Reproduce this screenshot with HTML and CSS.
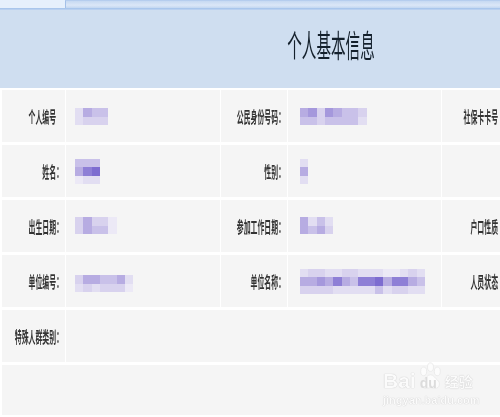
FILE: index.html
```html
<!DOCTYPE html>
<html lang="zh-CN">

<head>
    <meta charset="UTF-8">
    <title>个人基本信息</title>
    <link rel="stylesheet" href="styles.css">
</head>

<body>
    <div class="page">
        <div class="tabs">
            <div class="tab-first"></div>
            <div class="tab-rest"></div>
        </div>

        <div class="header">
            <h1 class="title">个人基本信息</h1>
        </div>

        <div class="info-table">
            <div class="cell label"><span>个人编号　</span></div>
            <div class="cell value">
                <div class="mosaic c4">
                    <i class="s2"></i><i class="s5"></i><i class="s4"></i><i class="s4"></i>
                    <i class="s2"></i><i class="s3"></i><i class="s3"></i><i class="s3"></i>
                </div>
            </div>
            <div class="cell label"><span>公民身份号码：</span></div>
            <div class="cell value right">
                <div class="mosaic c8">
                    <i class="s5"></i><i class="s6"></i><i class="s3"></i><i class="s6"></i><i class="s5"></i><i class="s4"></i><i class="s4"></i><i class="s3"></i>
                    <i class="s4"></i><i class="s4"></i><i class="s3"></i><i class="s4"></i><i class="s4"></i><i class="s4"></i><i class="s4"></i><i class="s2"></i>
                </div>
            </div>
            <div class="cell label"><span>社保卡卡号</span></div>

            <div class="cell label"><span>姓名：</span></div>
            <div class="cell value">
                <div class="mosaic c3">
                    <i class="s4"></i><i class="s4"></i><i class="s4"></i>
                    <i class="s5"></i><i class="s7"></i><i class="s8"></i>
                    <i class="s1"></i><i class="s2"></i><i class="s2"></i>
                </div>
            </div>
            <div class="cell label"><span>性别：</span></div>
            <div class="cell value right">
                <div class="mosaic c1">
                    <i class="s2"></i>
                    <i class="s5"></i>
                    <i class="s2"></i>
                </div>
            </div>
            <div class="cell label"><span></span></div>

            <div class="cell label"><span>出生日期：</span></div>
            <div class="cell value">
                <div class="mosaic c5 up">
                    <i class="s3"></i><i class="s5"></i><i class="s3"></i><i class="s3"></i><i class="s1"></i>
                    <i class="s3"></i><i class="s5"></i><i class="s4"></i><i class="s4"></i><i class="s1"></i>
                </div>
            </div>
            <div class="cell label"><span>参加工作日期：</span></div>
            <div class="cell value right">
                <div class="mosaic c4 up">
                    <i class="s5"></i><i class="s2"></i><i class="s4"></i><i class="s2"></i>
                    <i class="s5"></i><i class="s4"></i><i class="s5"></i><i class="s3"></i>
                </div>
            </div>
            <div class="cell label"><span>户口性质</span></div>

            <div class="cell label"><span>单位编号：</span></div>
            <div class="cell value">
                <div class="mosaic c7 down">
                    <i class="s3"></i><i class="s5"></i><i class="s5"></i><i class="s4"></i><i class="s4"></i><i class="s5"></i><i class="s2"></i>
                    <i class="s2"></i><i class="s3"></i><i class="s2"></i><i class="s3"></i><i class="s3"></i><i class="s3"></i><i class="s1"></i>
                </div>
            </div>
            <div class="cell label"><span>单位名称：</span></div>
            <div class="cell value right">
                <div class="mosaic c15 soft">
                    <i class="s2"></i><i class="s3"></i><i class="s3"></i><i class="s2"></i><i class="s2"></i><i class="s3"></i><i class="s3"></i><i class="s2"></i><i class="s2"></i><i class="s2"></i><i class="s1"></i><i class="s1"></i><i class="s2"></i><i class="s3"></i><i class="s2"></i>
                    <i class="s5"></i><i class="s5"></i><i class="s6"></i><i class="s5"></i><i class="s7"></i><i class="s5"></i><i class="s4"></i><i class="s7"></i><i class="s7"></i><i class="s8"></i><i class="s5"></i><i class="s7"></i><i class="s7"></i><i class="s5"></i><i class="s4"></i>
                    <i class="s3"></i><i class="s3"></i><i class="s3"></i><i class="s3"></i><i class="s2"></i><i class="s2"></i><i class="s2"></i><i class="s2"></i><i class="s2"></i><i class="s4"></i><i class="s2"></i><i class="s3"></i><i class="s3"></i><i class="s2"></i><i class="s2"></i>
                </div>
            </div>
            <div class="cell label"><span>人员状态</span></div>

            <div class="cell label"><span>特殊人群类别：</span></div>
            <div class="cell wide"></div>

            <div class="cell full"></div>
        </div>

        <div class="watermark">
            <div class="wm-logo">
                <span class="wm-bai">Bai</span>
                <svg class="wm-paw" viewBox="0 0 34 34">
                    <ellipse cx="9" cy="11" rx="3.5" ry="5"></ellipse>
                    <ellipse cx="17" cy="6" rx="3.5" ry="5"></ellipse>
                    <ellipse cx="25" cy="11" rx="3.5" ry="5"></ellipse>
                    <path d="M17 15c-4 0-5 4-8 6-4 3-3 10 3 10 2 0 3-1 5-1s3 1 5 1c6 0 7-7 3-10-3-2-4-6-8-6z"></path>
                </svg>
                <span class="wm-du">du</span>
                <span class="wm-jy">经验</span>
            </div>
            <div class="wm-url">jingyan.baidu.com</div>
        </div>
    </div>
</body>

</html>
```

FILE: styles.css
```css
html, body {
    margin: 0;
    padding: 0;
    background: #ffffff;
}

.page {
    position: relative;
    width: 500px;
    height: 417px;
    overflow: hidden;
    font-family: "Noto Sans CJK SC", "Liberation Sans", sans-serif;
}

.tabs {
    display: flex;
    height: 9px;
    border-bottom: 1px solid #a9c6ec;
    box-sizing: border-box;
    background: #d7e5f7;
}

.tab-first {
    width: 65px;
    background: #e6f0fc;
}

.tab-rest {
    flex: 1;
    border-left: 1px solid #a3c0e8;
    border-top: 1px solid #b5cdee;
    background: linear-gradient(#c6d9f2, #dbe7f7 60%, #c3d7f1);
}

.header {
    display: flex;
    justify-content: center;
    align-items: center;
    height: 79px;
    background: #cfdef0;
    box-sizing: border-box;
    border-top: 1px solid #b9d0ef;
}

.title {
    margin: 0 0 10px 162px;
    font-size: 31px;
    font-weight: 400;
    line-height: 32px;
    color: #14202c;
    white-space: nowrap;
    transform: scaleX(0.47);
    filter: blur(0.3px);
}

.info-table {
    display: grid;
    grid-template-columns: 63px 154px 66px 153px 58px;
    grid-auto-rows: 52px;
    column-gap: 1px;
    row-gap: 3px;
    padding: 2px 0 0 2px;
}

.cell {
    display: flex;
    align-items: center;
    background: #f5f5f5;
    box-sizing: border-box;
    min-width: 0;
}

.label {
    justify-content: flex-end;
    padding-right: 2px;
}

.label span {
    display: block;
    font-size: 16px;
    font-weight: 700;
    line-height: 18px;
    color: #333333;
    white-space: nowrap;
    transform: scaleX(0.43);
    transform-origin: right center;
    filter: blur(0.4px);
}

.value {
    padding: 0 0 0 9px;
}

.right {
    padding-left: 12px;
}

.wide {
    grid-column: 2 / 6;
}

.full {
    grid-column: 1 / 6;
    height: 50px;
}

.mosaic {
    display: grid;
    grid-auto-rows: 8.33px;
    margin-top: 1px;
}

.mosaic i {
    display: block;
}

.up {
    margin-top: -1px;
}

.down {
    margin-top: 5px;
}

.soft {
    filter: blur(0.5px);
}

.c1 { grid-template-columns: repeat(1, 8.33px); }
.c3 { grid-template-columns: repeat(3, 8.33px); }
.c4 { grid-template-columns: repeat(4, 8.33px); }
.c5 { grid-template-columns: repeat(5, 8.33px); }
.c7 { grid-template-columns: repeat(7, 8.33px); }
.c8 { grid-template-columns: repeat(8, 8.33px); }
.c15 { grid-template-columns: repeat(15, 8.33px); }

.s1 { background: #ece9f6; }
.s2 { background: #e2def2; }
.s3 { background: #d8d2ee; }
.s4 { background: #c9c1e9; }
.s5 { background: #b7ace2; }
.s6 { background: #a598dc; }
.s7 { background: #8e7fd6; }
.s8 { background: #7d6cd0; }

.watermark {
    position: absolute;
    left: 383px;
    top: 363px;
    width: 112px;
    color: #fbfbfb;
    font-family: "Liberation Sans", sans-serif;
    filter: blur(0.4px);
}

.wm-logo {
    display: flex;
    align-items: flex-end;
    height: 28px;
    font-size: 21px;
    font-weight: 700;
    line-height: 20px;
    text-shadow: 0 0 1px rgba(0, 0, 0, 0.3);
}

.wm-paw {
    width: 29px;
    height: 29px;
    margin-left: 0;
    fill: #fcfcfc;
    stroke: #e2e2e2;
    stroke-width: 0.7;
}

.wm-du {
    margin-left: -25px;
    width: 21px;
    font-size: 14px;
    line-height: 16px;
    color: #dcdcdc;
    text-shadow: none;
}

.wm-jy {
    margin-left: 4px;
    font-family: "Noto Sans CJK SC", sans-serif;
    font-size: 14px;
    font-weight: 700;
    line-height: 20px;
}

.wm-url {
    margin-top: 3px;
    font-size: 11px;
    font-weight: 700;
    line-height: 12px;
    color: #fbfbfb;
    white-space: nowrap;
    text-shadow: 0 0 1px rgba(0, 0, 0, 0.28);
}
```
